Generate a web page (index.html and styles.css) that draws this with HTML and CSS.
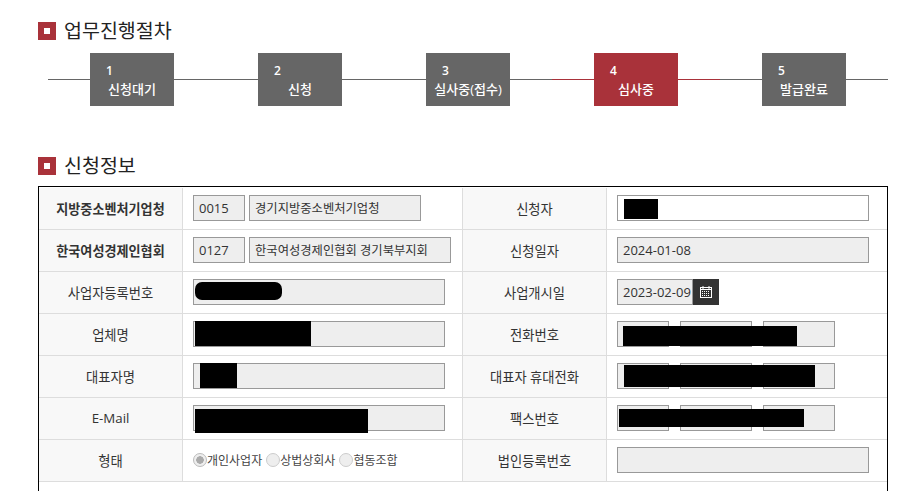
FILE: index.html
```html
<!DOCTYPE html>
<html lang="ko">

<head>
  <meta charset="utf-8">
  <title>업무진행절차</title>
  <link rel="stylesheet" href="styles.css">
</head>

<body>
  <h2 class="sec-title"><span class="sec-mark"></span>업무진행절차</h2>

  <div class="steps">
    <div class="step"><span class="step-no">1</span><span class="step-name">신청대기</span></div>
    <div class="step"><span class="step-no">2</span><span class="step-name">신청</span></div>
    <div class="step"><span class="step-no">3</span><span class="step-name">실사중(접수)</span></div>
    <div class="step on"><span class="step-no">4</span><span class="step-name">심사중</span></div>
    <div class="step"><span class="step-no">5</span><span class="step-name">발급완료</span></div>
  </div>

  <h2 class="sec-title sec-second"><span class="sec-mark"></span>신청정보</h2>

  <div class="form-box">
    <table class="form-table">
      <tr>
        <th class="strong">지방중소벤처기업청</th>
        <td><input class="ipt w52" value="0015" readonly><input class="ipt ko w172 gap" value="경기지방중소벤처기업청" readonly></td>
        <th>신청자</th>
        <td><input class="ipt w252 white" readonly><i class="mask m-name"></i></td>
      </tr>
      <tr>
        <th class="strong">한국여성경제인협회</th>
        <td><input class="ipt w52" value="0127" readonly><input class="ipt ko w202 gap" value="한국여성경제인협회 경기북부지회" readonly></td>
        <th>신청일자</th>
        <td><input class="ipt w252" value="2024-01-08" readonly></td>
      </tr>
      <tr>
        <th>사업자등록번호</th>
        <td><input class="ipt w252" readonly><i class="mask m-bizno"></i></td>
        <th>사업개시일</th>
        <td>
          <div class="date-wrap">
            <input class="ipt w76 date" value="2023-02-09" readonly>
            <button class="cal-btn" type="button" aria-label="달력">
              <svg width="12" height="12" viewBox="0 0 12 12">
                <path d="M3 0v3M9 0v3" stroke="#fff" fill="none" />
                <rect x="0.5" y="1.5" width="11" height="10" fill="none" stroke="#fff" />
                <path d="M1 3.5h10" stroke="#fff" fill="none" />
                <path d="M2 5.5h8M2 7.5h8M2 9.5h8" stroke="#fff" stroke-dasharray="1 1" fill="none" />
              </svg>
            </button>
          </div>
        </td>
      </tr>
      <tr>
        <th>업체명</th>
        <td><input class="ipt w252" readonly><i class="mask m-corp"></i></td>
        <th>전화번호</th>
        <td>
          <div class="tel-wrap">
            <input class="ipt w52" readonly><input class="ipt w72" readonly><input class="ipt w72" readonly>
          </div>
          <i class="mask m-tel"></i>
        </td>
      </tr>
      <tr>
        <th>대표자명</th>
        <td><input class="ipt w252" readonly><i class="mask m-ceo"></i></td>
        <th>대표자 휴대전화</th>
        <td>
          <div class="tel-wrap">
            <input class="ipt w52" readonly><input class="ipt w72" readonly><input class="ipt w72" readonly>
          </div>
          <i class="mask m-mobile"></i>
        </td>
      </tr>
      <tr>
        <th>E-Mail</th>
        <td><input class="ipt w252" readonly><i class="mask m-mail"></i></td>
        <th>팩스번호</th>
        <td>
          <div class="tel-wrap">
            <input class="ipt w52" readonly><input class="ipt w72" readonly><input class="ipt w72" readonly>
          </div>
          <i class="mask m-fax"></i>
        </td>
      </tr>
      <tr>
        <th>형태</th>
        <td>
          <div class="radios">
            <label><span class="radio checked"></span>개인사업자</label>
            <label><span class="radio"></span>상법상회사</label>
            <label><span class="radio"></span>협동조합</label>
          </div>
        </td>
        <th>법인등록번호</th>
        <td><input class="ipt w252" readonly></td>
      </tr>
    </table>
  </div>
</body>

</html>
```

FILE: styles.css
```css
html, body {
  height: 100%;
}

body {
  margin: 0;
  overflow: hidden;
  background-color: #fff;
  color: #333;
  font-family: "Open Sans", "Noto Sans CJK KR", sans-serif;
  font-size: 13px;
}

.sec-title {
  display: flex;
  align-items: center;
  height: 28px;
  margin: 0;
  padding: 17px 0 0 38px;
  font-size: 19.5px;
  font-weight: 400;
  line-height: 28px;
  color: #222;
}

.sec-second {
  padding-top: 46px;
}

.sec-mark {
  width: 6px;
  height: 6px;
  margin-right: 8px;
  border: 6px solid #a9323a;
  background-color: #fff;
}

.steps {
  display: flex;
  gap: 84px;
  width: 756px;
  height: 53px;
  margin: 8px 0 0 48px;
  padding-left: 42px;
  padding-right: 42px;
  background: linear-gradient(#a9323a, #a9323a) 504px 26px / 168px 1px no-repeat,
    linear-gradient(#666, #666) 0 26px / 100% 1px no-repeat;
}

.step {
  display: flex;
  flex-direction: column;
  width: 84px;
  height: 53px;
  background-color: #666;
  color: #fff;
  font-weight: 500;
  text-align: center;
}

.step.on {
  background-color: #a9323a;
}

.step-no {
  margin-top: 9px;
  padding-left: 16px;
  font-size: 12px;
  font-weight: 600;
  line-height: 17px;
  text-align: left;
}

.step-name {
  font-size: 13px;
  line-height: 21px;
}

.form-box {
  box-sizing: border-box;
  width: 850px;
  height: 305px;
  margin: 6px 0 0 38px;
  padding: 1px 0 0;
  border: 1px solid #000;
  border-bottom: 0;
}

.form-table {
  width: 848px;
  border-collapse: separate;
  border-spacing: 0;
  table-layout: fixed;
}

.form-table tr {
  height: 42px;
}

.form-table th,
.form-table td {
  position: relative;
  box-sizing: border-box;
  padding: 0 0 1px 10px;
  border: solid #ddd;
  border-width: 0 1px 1px 0;
  text-align: left;
}

.form-table th {
  width: 144px;
  padding: 0 0 1px;
  background-color: #f8f8f8;
  font-size: 13.3px;
  font-weight: 400;
  text-align: center;
}

.form-table th.strong {
  font-size: 13.1px;
  font-weight: 700;
}

.form-table td {
  width: 280px;
}

.form-table tr td:last-child {
  border-right: 0;
}

.ipt {
  box-sizing: border-box;
  height: 26px;
  margin: 0;
  padding: 0 5px;
  border: 1px solid #999;
  background-color: #eee;
  color: #333;
  font-family: inherit;
  font-size: 13px;
  vertical-align: middle;
}

.ko {
  font-size: 12.3px;
}

.date {
  padding-right: 0;
}

.white {
  background-color: #fff;
}

.gap {
  margin-left: 4px;
}

.w52 { width: 52px; }
.w72 { width: 72px; }
.w76 { width: 76px; }
.w172 { width: 172px; }
.w202 { width: 202px; }
.w252 { width: 252px; }

.date-wrap {
  display: flex;
}

.cal-btn {
  display: flex;
  align-items: center;
  justify-content: center;
  width: 26px;
  height: 26px;
  padding: 0;
  border: 0;
  background-color: #333;
}

.tel-wrap {
  display: flex;
  gap: 11px;
}

.radios {
  display: flex;
  gap: 4px;
  color: #444;
  font-size: 12px;
}

.radios label {
  display: flex;
  align-items: center;
}

.radio {
  box-sizing: border-box;
  width: 14px;
  height: 14px;
  border: 1px solid #ccc;
  border-radius: 50%;
  background-color: #eee;
}

.radio.checked {
  border-color: #bbb;
  background: radial-gradient(circle, #aaa 0 3.5px, #eee 4px);
}

/* 가림 처리 */
.mask {
  position: absolute;
  background-color: #000;
}

.m-name { left: 17px; top: 11px; width: 34px; height: 20px; }
.m-bizno { left: 12px; top: 10px; width: 87px; height: 18px; border-radius: 7px; }
.m-corp { left: 12px; top: 7px; width: 116px; height: 25px; }
.m-tel { left: 16px; top: 12px; width: 174px; height: 20px; }
.m-ceo { left: 17px; top: 7px; width: 37px; height: 25px; }
.m-mobile { left: 17px; top: 9px; width: 191px; height: 22px; }
.m-mail { left: 12px; top: 11px; width: 173px; height: 24px; }
.m-fax { left: 12px; top: 11px; width: 185px; height: 18px; }
```
